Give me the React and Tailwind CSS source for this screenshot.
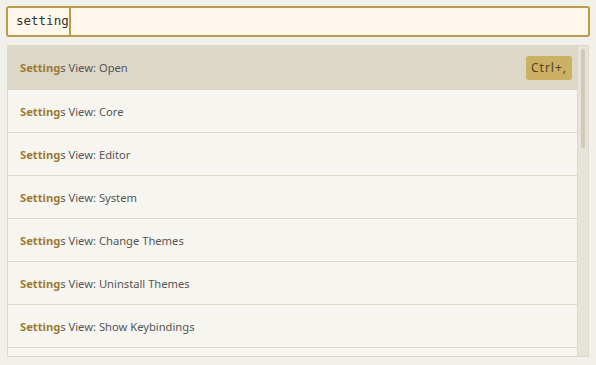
import React from 'react';

const items = [
  'Open',
  'Core',
  'Editor',
  'System',
  'Change Themes',
  'Uninstall Themes',
  'Show Keybindings',
];

export default function App() {
  return (
    <div className="w-[596px] h-[365px] bg-[#f2f0eb] overflow-hidden" style={{ fontFamily: '"Noto Sans", "Open Sans", sans-serif' }}>
      <div className="px-[6px] pt-[6px]">
        <div className="h-[31px] flex items-stretch border-2 border-[#bb9a48] rounded-[3px] bg-[#fff8ea]">
          <span className="pl-[8px] flex items-center text-[12.5px] text-[#333]" style={{ fontFamily: '"DejaVu Sans Mono", monospace' }}>
            setting
          </span>
          <span className="w-[2px] bg-[#bb9a48]" />
        </div>
      </div>
      <div className="mt-[8px] ml-[7px] mr-[7px] h-[312px] border border-[#ddd8ca] bg-[#f7f5f0] flex overflow-hidden">
        <div className="flex-1 min-w-0">
          {items.map((name, i) => (
            <div
              key={name}
              className={`h-[43px] flex items-center justify-between pl-[12px] pr-[5px] text-[11.2px] ${i === 0 ? 'bg-[#ddd7c8]' : 'border-t border-[#ddd6c4]'}`}
            >
              <span className="text-[#555] pt-[2px]">
                <b className="font-bold text-[#9c7b34]">Setting</b>s View: {name}
              </span>
              {i === 0 && (
                <span className="bg-[#ccb063] rounded-[3px] h-[24px] w-[46px] flex items-center justify-center text-[12px] tracking-[1px] text-[#4f4320]">
                  Ctrl+,
                </span>
              )}
            </div>
          ))}
          <div className="h-[43px] border-t border-[#ddd6c4]" />
        </div>
        <div className="w-[11px] bg-[#e7e3d9] border-l border-[#ddd8ca] pt-[3px] flex justify-center">
          <div className="w-[4px] h-[99px] rounded-full bg-[#cfc9b8]" />
        </div>
      </div>
    </div>
  );
}
